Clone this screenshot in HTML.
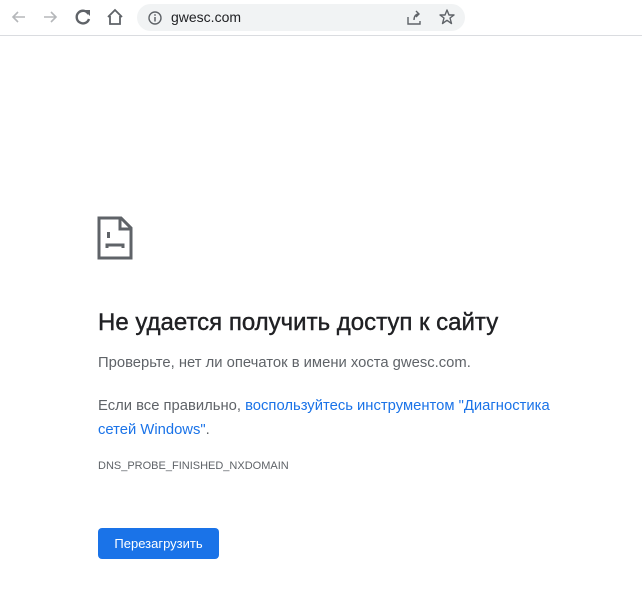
<!DOCTYPE html>
<html><head><meta charset="utf-8"><style>
body{margin:0;width:642px;height:597px;background:#fff;font-family:"Liberation Sans",sans-serif;position:relative;overflow:hidden}
.bar{position:absolute;left:0;top:0;width:642px;height:35px;border-bottom:1px solid #dadce0;background:#fff}
.url{position:absolute;left:137px;top:4px;width:328px;height:27px;border-radius:14px;background:#f1f3f4}
.url span{position:absolute;left:34px;top:5px;font-size:14px;color:#202124}
svg{position:absolute}
.t{position:absolute;left:98px;white-space:nowrap}
h1{position:absolute;left:98px;top:309px;margin:0;font-size:24px;font-weight:normal;color:#202124;white-space:nowrap;-webkit-text-stroke:0.4px #202124}
.p{font-size:14.8px;color:#5f6368}
a{color:#1a73e8;text-decoration:none}
.btn{position:absolute;left:98px;top:528px;width:121px;height:31px;background:#1a73e8;border-radius:4px;color:#fff;font-size:13px;line-height:31px;text-align:center}
</style></head><body>
<div class="bar">
<svg width="20" height="20" style="left:9px;top:7px" viewBox="0 0 20 20"><path d="M16 10H4M9 5L4 10L9 15" stroke="#b5b7ba" stroke-width="1.6" fill="none"/></svg>
<svg width="20" height="20" style="left:40px;top:7px" viewBox="0 0 20 20"><path d="M4 10H16M11 5L16 10L11 15" stroke="#b5b7ba" stroke-width="1.6" fill="none"/></svg>
<svg width="20" height="20" style="left:73px;top:7px" viewBox="0 0 20 20"><path d="M15.5 7A6.3 6.3 0 1 0 16 12" stroke="#5f6368" stroke-width="2.4" fill="none"/><path d="M11 3H17V9Z" fill="#5f6368"/></svg>
<svg width="20" height="20" style="left:105px;top:7px" viewBox="0 0 20 20"><path d="M3 10L10 3L17 10M5 9V17H15V9" stroke="#5f6368" stroke-width="1.8" fill="none"/></svg>
<div class="url">
<svg width="16" height="16" style="left:10px;top:6px" viewBox="0 0 16 16"><circle cx="8" cy="8" r="6" stroke="#5f6368" stroke-width="1.4" fill="none"/><path d="M8 7V11.5" stroke="#5f6368" stroke-width="1.5"/><circle cx="8" cy="5" r="0.9" fill="#5f6368"/></svg>
<span>gwesc.com</span>
<svg width="18" height="18" style="left:268px;top:5px" viewBox="0 0 18 18"><path d="M3 8V15H15V12M9 11C9 7 11 5 14 5M11 2L14 5L11 8" stroke="#5f6368" stroke-width="1.4" fill="none"/></svg>
<svg width="18" height="18" style="left:301px;top:4px" viewBox="0 0 18 18"><path d="M9 2L11 7H16L12 10L13.5 15.5L9 12.3L4.5 15.5L6 10L2 7H7Z" stroke="#5f6368" stroke-width="1.4" fill="none" stroke-linejoin="round"/></svg>
</div>
</div>
<svg width="36" height="44" style="left:97px;top:216px" viewBox="0 0 36 44"><path d="M2 2H24L34 12V42H2Z" stroke="#5f6368" stroke-width="3" fill="none"/><path d="M23 2V13H34" stroke="#5f6368" stroke-width="3" fill="none"/><rect x="10" y="16" width="3" height="6" fill="#5f6368"/><path d="M10 32V29H26V32" stroke="#5f6368" stroke-width="3" fill="none"/></svg>
<h1>Не удается получить доступ к сайту</h1>
<div class="t p" style="top:355px">Проверьте, нет ли опечаток в имени хоста gwesc.com.</div>
<div class="t p" style="top:394px;line-height:24px">Если все правильно, <a>воспользуйтесь инструментом "Диагностика<br>сетей Windows"</a>.</div>
<div class="t" style="top:460px;font-size:11px;color:#5f6368">DNS_PROBE_FINISHED_NXDOMAIN</div>
<div class="btn">Перезагрузить</div>
</body></html>
